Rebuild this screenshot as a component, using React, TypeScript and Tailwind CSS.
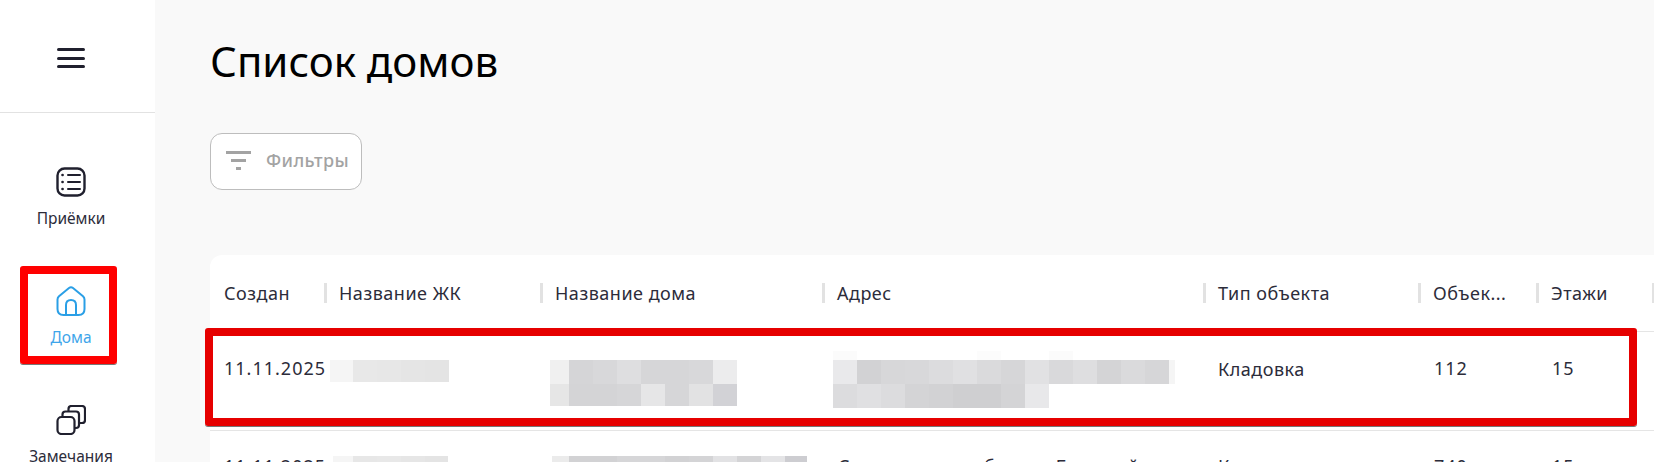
const fontFamily = "font-['Noto_Sans','Open_Sans',sans-serif]";

const ListIcon = () => (
  <svg width="30" height="30" viewBox="0 0 30 30" fill="none" stroke="#20202e" strokeWidth="2.4" strokeLinecap="round">
    <rect x="1.5" y="1.5" width="27" height="27" rx="7" />
    <path d="M12 8h12M12 15h12M12 22h12" strokeWidth="2" />
    <path d="M6.5 8h.1M6.5 15h.1M6.5 22h.1" strokeWidth="2.6" />
  </svg>
);

const HomeIcon = () => (
  <svg width="30" height="30" viewBox="0 0 30 30" fill="none" stroke="#2a9fe6" strokeWidth="2">
    <path d="M1.5 13.5Q1.5 11.5 3 10.2L13 2Q15 .5 17 2L27 10.2Q28.5 11.5 28.5 13.5V23Q28.5 29 22.5 29H7.5Q1.5 29 1.5 23Z" />
    <path d="M10 29V19Q10 14 15 14Q20 14 20 19V29" />
  </svg>
);

const LayersIcon = () => (
  <svg width="30" height="30" viewBox="0 0 30 30" fill="none" stroke="#20202e" strokeWidth="2.2">
    <rect x="1.5" y="12" width="17" height="17" rx="4" />
    <path d="M6.5 11V9.5Q6.5 6.5 9.5 6.5H20Q23 6.5 23 9.5V20Q23 23 20 23H18.5" />
    <path d="M12.5 6V4Q12.5 1 15.5 1H26Q29 1 29 4V15Q29 18 26 18H23" />
  </svg>
);

const NavItem = ({ icon, label, active }: { icon: React.ReactNode; label: string; active?: boolean }) => (
  <div className="flex h-[119px] flex-col items-center">
    {icon}
    <span className={active ? "mt-[11px] text-[15.5px] leading-[20px] text-[#3ea5ea]" : "mt-[11px] text-[15.5px] leading-[20px] text-[#2c2c3a]"}>
      {label}
    </span>
  </div>
);

const Mosaic = ({ rows, className }: { rows: { h: string; cells: string[] }[]; className: string }) => (
  <div className={className}>
    {rows.map((row, i) => (
      <div key={i} className={`flex ${row.h}`}>
        {row.cells.map((c, j) => (
          <div key={j} className={c} />
        ))}
      </div>
    ))}
  </div>
);

const headers = ["Создан", "Название ЖК", "Название дома", "Адрес", "Тип объекта", "Объек...", "Этажи", ""];
const cols = "grid grid-cols-[114px_216px_282px_381px_215px_118px_116px_20px]";

const complexRow1 = {
  h: "h-[22px]",
  cells: ["w-[23px] bg-[#f5f5f5]", "w-[24px] bg-[#e8e8e8]", "w-[24px] bg-[#e7e7e7]", "w-[24px] bg-[#e5e5e5]", "w-[24px] bg-[#e4e4e4]"],
};

const nameRow1 = [
  {
    h: "h-[24px]",
    cells: ["w-[19px] bg-[#f0f0f0]", "w-[24px] bg-[#d5d5d7]", "w-[24px] bg-[#d8d8da]", "w-[24px] bg-[#dedee0]", "w-[24px] bg-[#d6d6d8]", "w-[24px] bg-[#d6d6d8]", "w-[24px] bg-[#d8d8da]", "w-[24px] bg-[#ececed]"],
  },
  {
    h: "h-[22px]",
    cells: ["w-[19px] bg-[#e6e6e6]", "w-[24px] bg-[#d4d4d6]", "w-[24px] bg-[#d4d4d6]", "w-[24px] bg-[#d6d6d8]", "w-[24px] bg-[#e6e6e7]", "w-[24px] bg-[#d6d6d8]", "w-[24px] bg-[#e2e2e3]", "w-[24px] bg-[#d2d2d6]"],
  },
];

const addressRow1 = [
  {
    h: "h-[9px]",
    cells: ["w-[24px] bg-[#fbfbfb]", "w-[120px]", "w-[24px] bg-[#fcfcfc]", "w-[48px]", "w-[24px] bg-[#fbfbfb]"],
  },
  {
    h: "h-[24px]",
    cells: ["w-[24px] bg-[#e9e9eb]", "w-[24px] bg-[#d2d2d4]", "w-[24px] bg-[#d7d7d9]", "w-[24px] bg-[#d8d8da]", "w-[24px] bg-[#dcdcde]", "w-[24px] bg-[#e0e0e2]", "w-[24px] bg-[#dadadc]", "w-[24px] bg-[#d6d6d8]", "w-[24px] bg-[#e1e1e3]", "w-[24px] bg-[#d9d9db]", "w-[24px] bg-[#dedee0]", "w-[24px] bg-[#d4d4d6]", "w-[24px] bg-[#dadadc]", "w-[24px] bg-[#d6d6d8]", "w-[6px] bg-[#f5f5f5]"],
  },
  {
    h: "h-[24px]",
    cells: ["w-[24px] bg-[#dcdcde]", "w-[24px] bg-[#e0e0e2]", "w-[24px] bg-[#dcdcde]", "w-[24px] bg-[#d4d4d6]", "w-[24px] bg-[#d2d2d4]", "w-[24px] bg-[#cfcfd1]", "w-[24px] bg-[#cfcfd1]", "w-[24px] bg-[#d4d4d6]", "w-[24px] bg-[#e8e8ea]"],
  },
];

const complexRow2 = {
  h: "h-[24px]",
  cells: ["w-[20px] bg-[#f5f5f5]", "w-[24px] bg-[#e7e7e7]", "w-[24px] bg-[#e8e8e8]", "w-[24px] bg-[#e6e6e6]", "w-[23px] bg-[#e4e4e4]"],
};

const nameRow2 = {
  h: "h-[24px]",
  cells: ["w-[17px] bg-[#ebebeb]", "w-[24px] bg-[#d2d2d4]", "w-[24px] bg-[#d2d2d4]", "w-[24px] bg-[#d6d6d8]", "w-[24px] bg-[#d6d6d8]", "w-[24px] bg-[#d2d2d4]", "w-[24px] bg-[#d4d4d6]", "w-[24px] bg-[#e2e2e4]", "w-[24px] bg-[#d4d4d6]", "w-[24px] bg-[#e4e4e6]", "w-[22px] bg-[#cdcdd1]"],
};

const text = "text-[18px] leading-[24px] tracking-[0.5px] text-[#2c2c3a]";
const nums = "text-[18px] leading-[24px] tracking-[1px] text-[#2c2c3a]";

const App = () => {
  return (
    <div className={`relative flex h-[462px] w-[1654px] overflow-hidden bg-[#f9f9f9] ${fontFamily}`}>
      <aside className="w-[155px] shrink-0 bg-white">
        <div className="flex h-[113px] items-start justify-center border-b border-[#e2e2e2] pr-[13px] pt-[48px]">
          <div className="flex h-[20px] w-[28px] flex-col justify-between">
            <div className="h-[3px] rounded-full bg-[#20202e]" />
            <div className="h-[3px] rounded-full bg-[#20202e]" />
            <div className="h-[3px] rounded-full bg-[#20202e]" />
          </div>
        </div>
        <nav className="pr-[13px] pt-[54px]">
          <NavItem icon={<ListIcon />} label="Приёмки" />
          <NavItem icon={<HomeIcon />} label="Дома" active />
          <NavItem icon={<LayersIcon />} label="Замечания" />
        </nav>
      </aside>

      <main className="min-w-0 flex-1 pl-[55px]">
        <h1 className="pt-[34px] text-[42px] leading-[54px] text-black">Список домов</h1>
        <button
          type="button"
          className="mt-[45px] flex h-[57px] w-[152px] items-center rounded-[12px] border border-[#bdbdbd] bg-white pb-[2px] pl-[15px] text-[18px] font-medium tracking-[0.4px] text-[#a3a3a3]"
        >
          <span className="flex w-[25px] flex-col items-center gap-[5px]">
            <span className="h-[3px] w-[25px] bg-[#a3a3a3]" />
            <span className="h-[3px] w-[15px] bg-[#a3a3a3]" />
            <span className="h-[3px] w-[5px] bg-[#a3a3a3]" />
          </span>
          <span className="ml-[15px]">Фильтры</span>
        </button>

        <div className="mt-[65px] w-[1499px] rounded-tl-[12px] bg-white">
          <div className={`${cols} h-[77px] border-b border-[#e5e5e5]`}>
            {headers.map((h, i) => (
              <div key={i} className={`flex items-center ${text}`}>
                {i > 0 && <span className="h-[20px] w-[3px] shrink-0 bg-[#e2e2e2]" />}
                <span className={i > 0 ? "pl-[12px]" : "pl-[14px]"}>{h}</span>
              </div>
            ))}
          </div>

          <div className={`${cols} h-[99px] border-b border-[#e5e5e5]`}>
            <div className={`${nums} pl-[14px] pt-[24px]`}>11.11.2025</div>
            <Mosaic className="pl-[6px] pt-[28px]" rows={[complexRow1]} />
            <Mosaic className="pl-[10px] pt-[28px]" rows={nameRow1} />
            <Mosaic className="pl-[11px] pt-[19px]" rows={addressRow1} />
            <div className={`${text} pl-[15px] pt-[25px]`}>Кладовка</div>
            <div className={`${nums} pl-[16px] pt-[24px]`}>112</div>
            <div className={`${nums} pl-[16px] pt-[24px]`}>15</div>
          </div>

          <div className={`${cols} h-[120px]`}>
            <div className={`${nums} pl-[14px] pt-[23px]`}>11.11.2025</div>
            <Mosaic className="pl-[9px] pt-[25px]" rows={[complexRow2]} />
            <Mosaic className="pl-[12px] pt-[25px]" rows={[nameRow2]} />
            <div className={`${text} pl-[16px] pt-[23px]`}>Свердловская область, Большой бульвар</div>
            <div className={`${text} pl-[15px] pt-[23px]`}>Кладовка</div>
            <div className={`${nums} pl-[16px] pt-[23px]`}>740</div>
            <div className={`${nums} pl-[16px] pt-[23px]`}>15</div>
          </div>
        </div>
      </main>

      {/* red annotation frames */}
      <div className="absolute left-[20px] top-[266px] h-[98px] w-[97px] rounded-[3px] border-[8px] border-[#ff0000] shadow-[0_1px_0_#777]" />
      <div className="absolute left-[205px] top-[328px] h-[98px] w-[1432px] rounded-[3px] border-[8px] border-[#e60000] shadow-[0_1px_0_#777]" />
    </div>
  );
};

export default App;
